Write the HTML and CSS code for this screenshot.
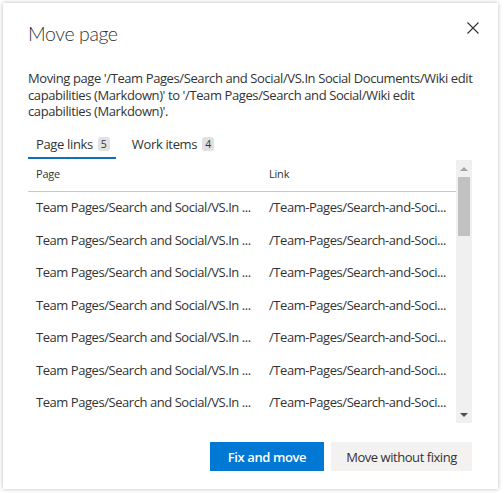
FILE: index.html
```html
<!DOCTYPE html>
<html lang="en">
<head>
<meta charset="utf-8">
<title>Move page</title>
<link rel="stylesheet" href="styles.css">
</head>
<body>
<div class="dialog">
  <div class="header">
    <h1 class="title">Move page</h1>
    <button class="close" aria-label="Close">
      <svg width="12" height="12" viewBox="0 0 12 12"><path d="M0.5 0.5 L11.5 11.5 M11.5 0.5 L0.5 11.5" stroke="#333" stroke-width="1.1" fill="none"/></svg>
    </button>
  </div>
  <p class="desc">Moving page '/Team Pages/Search and Social/VS.In Social Documents/Wiki edit<br>capabilities (Markdown)' to '/Team Pages/Search and Social/Wiki edit<br>capabilities (Markdown)'.</p>
  <div class="tabs">
    <div class="tab active">Page links <span class="badge">5</span></div>
    <div class="tab">Work items <span class="badge">4</span></div>
  </div>
  <div class="grid-wrap">
    <div class="grid">
      <div class="row head"><div class="cell c1">Page</div><div class="cell c2">Link</div></div>
      <div class="row"><div class="cell c1">Team Pages/Search and Social/VS.In ...</div><div class="cell c2">/Team-Pages/Search-and-Soci...</div></div>
      <div class="row"><div class="cell c1">Team Pages/Search and Social/VS.In ...</div><div class="cell c2">/Team-Pages/Search-and-Soci...</div></div>
      <div class="row"><div class="cell c1">Team Pages/Search and Social/VS.In ...</div><div class="cell c2">/Team-Pages/Search-and-Soci...</div></div>
      <div class="row"><div class="cell c1">Team Pages/Search and Social/VS.In ...</div><div class="cell c2">/Team-Pages/Search-and-Soci...</div></div>
      <div class="row"><div class="cell c1">Team Pages/Search and Social/VS.In ...</div><div class="cell c2">/Team-Pages/Search-and-Soci...</div></div>
      <div class="row"><div class="cell c1">Team Pages/Search and Social/VS.In ...</div><div class="cell c2">/Team-Pages/Search-and-Soci...</div></div>
      <div class="row"><div class="cell c1">Team Pages/Search and Social/VS.In ...</div><div class="cell c2">/Team-Pages/Search-and-Soci...</div></div>
    </div>
    <div class="scrollbar">
      <div class="arrow up"></div>
      <div class="track"><div class="thumb"></div></div>
      <div class="arrow down"></div>
    </div>
  </div>
  <div class="footer">
    <button class="btn primary">Fix and move</button>
    <button class="btn secondary">Move without fixing</button>
  </div>
</div>
</body>
</html>
```

FILE: styles.css
```css
* { box-sizing: border-box; }
html, body { margin: 0; padding: 0; background: #fff; }
body {
  font-family: "Open Sans", "Noto Sans", sans-serif;
  color: #333;
  width: 504px;
  height: 493px;
  overflow: hidden;
}
.dialog {
  margin: 3px 0 0 3px;
  width: 495px;
  background: #fff;
  box-shadow: 0 0 4px rgba(0,0,0,0.28);
  padding: 17px 26px 18px 25px;
}
.header {
  display: flex;
  justify-content: space-between;
  align-items: flex-start;
}
.title {
  margin: 0;
  font-family: "Lato", "Open Sans", sans-serif;
  font-size: 19.5px;
  line-height: 28px;
  font-weight: 300;
  letter-spacing: -0.4px;
  color: #333;
}
.close {
  width: 32px;
  height: 32px;
  margin: -8.5px -16.5px 0 0;
  padding: 0;
  border: 0;
  background: transparent;
  display: flex;
  align-items: center;
  justify-content: center;
}
.close svg { display: block; }
.desc {
  margin: 22px 0 3.5px;
  font-size: 13px;
  line-height: 16.5px;
  letter-spacing: -0.4px;
  white-space: nowrap;
}
.tabs {
  display: flex;
  gap: 8px;
  height: 36px;
  margin-bottom: 1px;
}
.tab {
  position: relative;
  padding: 12px 6px 0 8px;
  font-size: 13px;
  line-height: 18px;
  letter-spacing: -0.35px;
  display: flex;
  align-items: flex-start;
  gap: 5px;
  white-space: nowrap;
}
.tab.active::after {
  content: "";
  position: absolute;
  left: 0; right: 0; bottom: 0;
  height: 2px;
  background: #106ebe;
}
.badge {
  display: inline-block;
  min-width: 12px;
  height: 14px;
  margin-top: 2px;
  border-radius: 3px;
  background: #e1e1e1;
  font-size: 10.5px;
  line-height: 14px;
  text-align: center;
  letter-spacing: 0;
  color: #333;
}
.grid-wrap {
  display: flex;
  height: 263px;
}
.grid {
  flex: 1;
  overflow: hidden;
}
.row {
  display: flex;
  align-items: center;
  height: 32.5px;
  padding-bottom: 2px;
  font-size: 13px;
  letter-spacing: -0.45px;
  white-space: nowrap;
}
.row.head {
  height: 32px;
  align-items: flex-start;
  padding: 6px 0 0;
  border-bottom: 1px solid #c8c8c8;
  font-size: 11px;
  line-height: 16px;
  letter-spacing: -0.2px;
}
.cell { padding-left: 8px; overflow: hidden; }
.c1 { width: 233px; flex: none; }
.c2 { flex: 1; }
.scrollbar {
  width: 16px;
  flex: none;
  background: #f0f0f0;
  display: flex;
  flex-direction: column;
}
.arrow {
  height: 17px;
  display: flex;
  align-items: center;
  justify-content: center;
}
.arrow::before {
  content: "";
  width: 0; height: 0;
  border-left: 4px solid transparent;
  border-right: 4px solid transparent;
}
.arrow.up::before { border-bottom: 4px solid #a3a3a3; }
.arrow.down::before { border-top: 4px solid #505050; }
.track { flex: 1; padding: 0 2px; }
.thumb { height: 59px; background: #c1c1c1; }
.footer {
  display: flex;
  justify-content: flex-end;
  gap: 7px;
  margin-top: 19px;
}
.btn {
  height: 29px;
  border: 0;
  padding: 0;
  font-family: inherit;
  font-size: 13px;
  letter-spacing: -0.45px;
  color: #333;
  white-space: nowrap;
}
.primary {
  width: 114px;
  background: #0078d4;
  color: #fff;
  font-weight: 600;
  letter-spacing: -0.4px;
}
.secondary {
  width: 141px;
  background: #f3f2f1;
}
```
